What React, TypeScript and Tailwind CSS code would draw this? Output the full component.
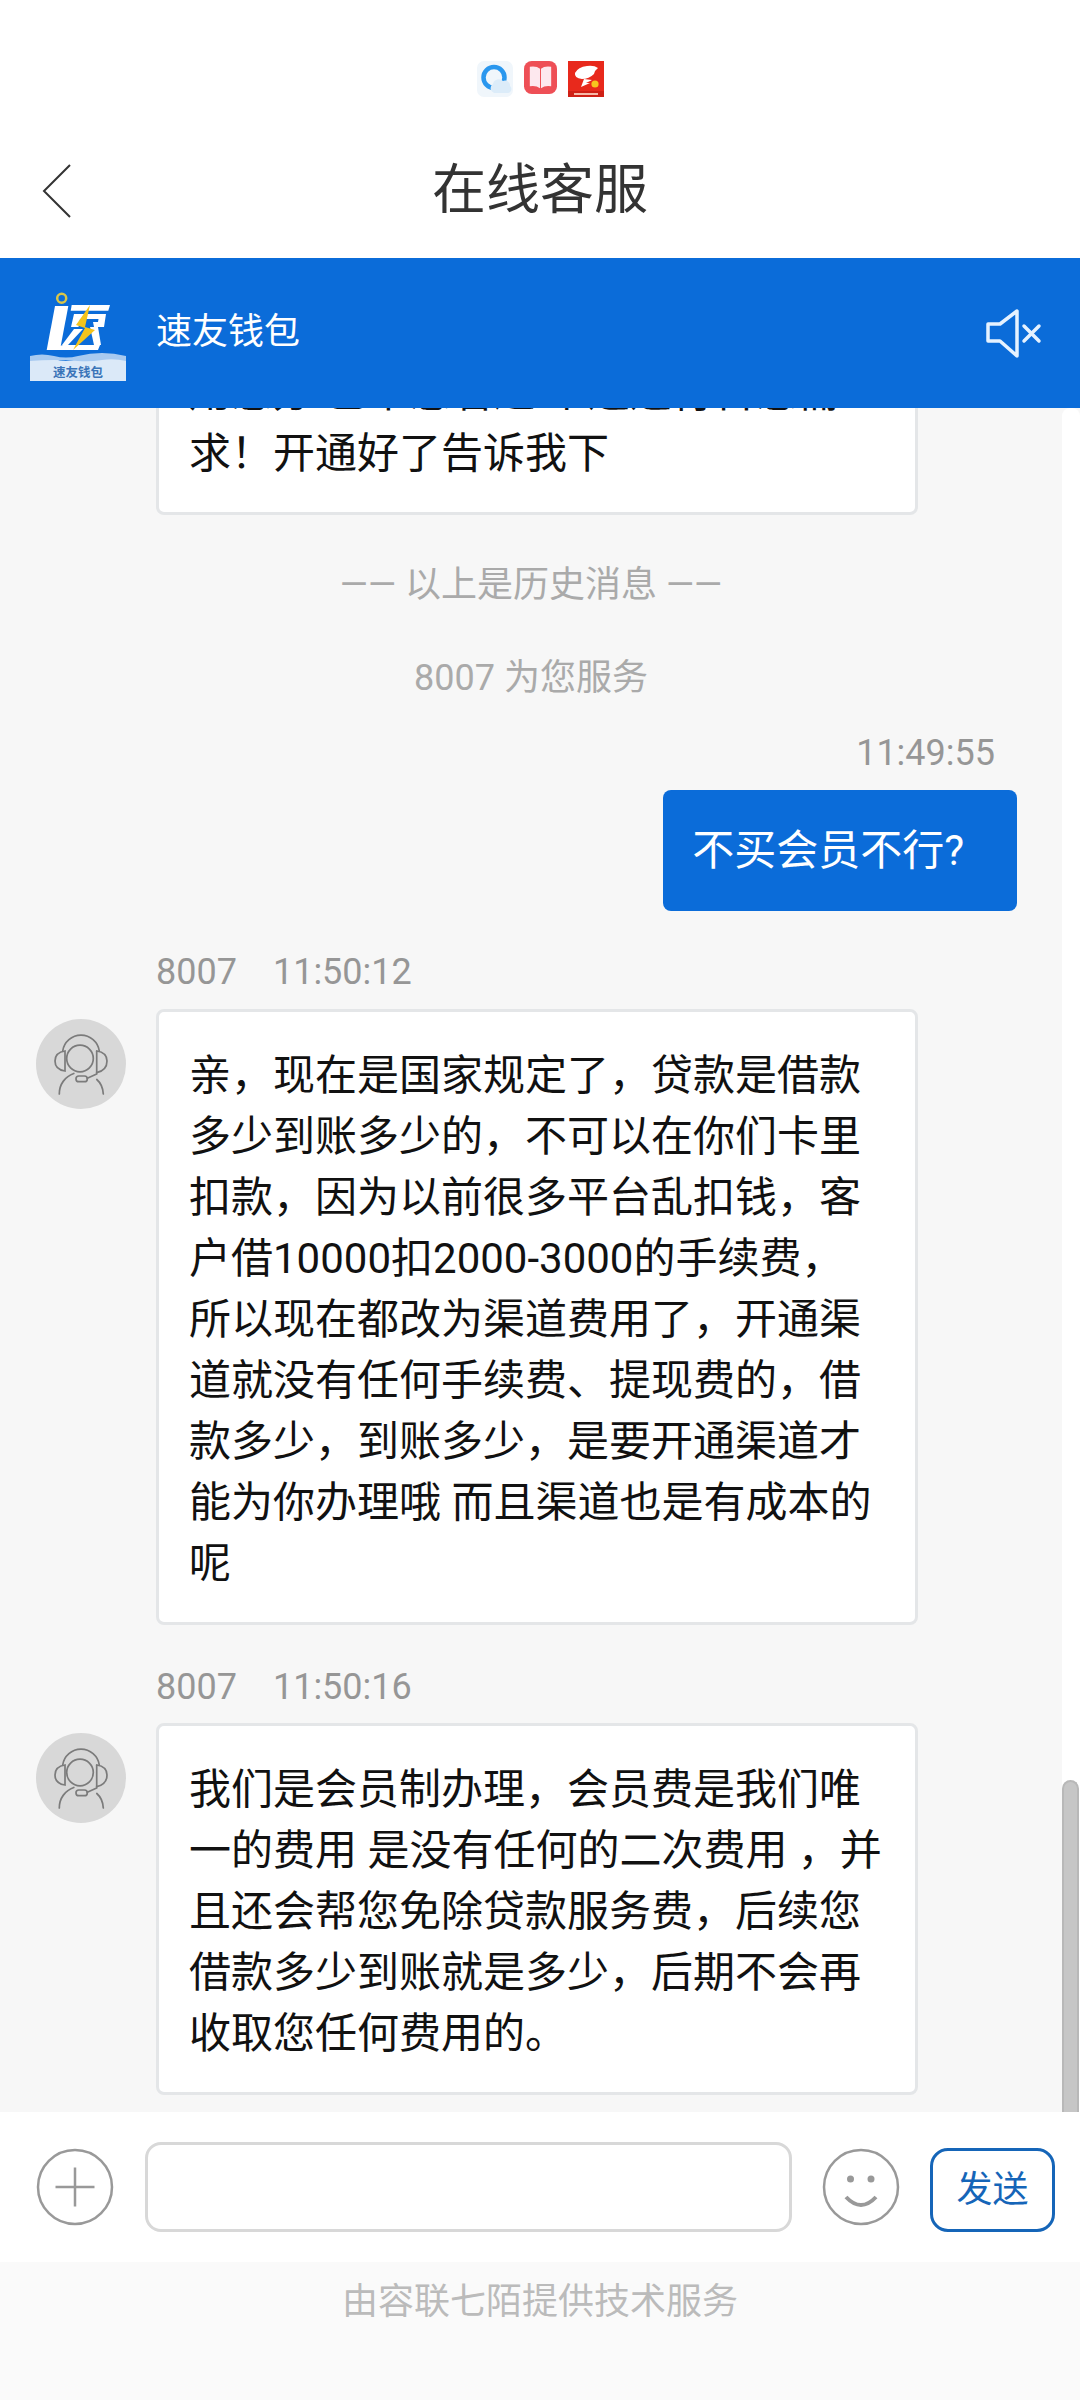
import React from 'react';

const font = { fontFamily: 'Roboto, "Noto Sans CJK SC", "Noto Sans", sans-serif' };

const MSG_RULES =
  '亲\uFF0C现在是国家规定了\uFF0C贷款是借款多少到账多少的\uFF0C不可以在你们卡里扣款\uFF0C因为以前很多平台乱扣钱\uFF0C客户借10000扣2000-3000的手续费\uFF0C所以现在都改为渠道费用了\uFF0C开通渠道就没有任何手续费、提现费的\uFF0C借款多少\uFF0C到账多少\uFF0C是要开通渠道才能为你办理哦 而且渠道也是有成本的呢';
const MSG_MEMBER =
  '我们是会员制办理\uFF0C会员费是我们唯一的费用 是没有任何的二次费用 \uFF0C并且还会帮您免除贷款服务费\uFF0C后续您借款多少到账就是多少\uFF0C后期不会再收取您任何费用的。';

const QQBrowserIcon = () => (
  <svg width="36" height="36" viewBox="0 0 36 36">
    <rect width="36" height="36" rx="7" fill="#f0f6fb" />
    <circle cx="17" cy="16.5" r="10.5" fill="none" stroke="#2a97ee" strokeWidth="4.5" />
    <path d="M17 32a5 5 0 0 1-1-9 6 6 0 0 1 10-3 5 5 0 0 1 7 5 4 4 0 0 1-2 7z" fill="#dcecf9" />
  </svg>
);

const BookIcon = () => (
  <svg width="33" height="33" viewBox="0 0 34 34">
    <rect width="34" height="34" rx="8" fill="#ee4f56" />
    <path d="M6 6q7-1 10.500 2v20q-4-3-10.500-2z" fill="#fde8ee" />
    <path d="M28 6q-7-1-10.500 2v20q4-3 10.500-2z" fill="#fde8ee" />
  </svg>
);

const FishIcon = () => (
  <svg width="36" height="36" viewBox="0 0 36 36">
    <rect width="36" height="36" fill="#e8291c" />
    <path d="M7 12q3-6 12-7 7-1 11 2-3 2-4 6-5 5-12 5-8-1-7-6z" fill="#fff" />
    <path d="M13 26l3-8 8 1-6 3 4 0z" fill="#fff" />
    <circle cx="27" cy="23" r="3.600" fill="#f7c51e" />
    <rect x="0" y="30" width="36" height="6" fill="#cf2015" />
    <rect x="6" y="32" width="24" height="2" fill="#f6b9a8" />
  </svg>
);

const LogoMark = () => (
  <svg width="96" height="92" viewBox="0 0 96 92" className="mt-[6px] shrink-0">
    <circle cx="31.700" cy="8.300" r="4.500" fill="none" stroke="#d8c64a" strokeWidth="2.500" />
    <path d="M25 16h13.300L30 60H16.700z" fill="#fff" />
    <path d="M41.700 15H80l-1.700 5.700H40.700z" fill="#fff" />
    <path d="M44 24h32l-2 13H64l-1-5h5l.5-3H50l-1.500 8H41z" fill="#fff" />
    <path d="M60 37h8l3 18h-7z" fill="#fff" />
    <path d="M44 39h9L38 55h-6z" fill="#fff" />
    <path d="M16.700 60H68l2-5H33z" fill="#fff" />
    <path d="M60 15L46 35l9 3-12 22 22-20-10-3z" fill="#f4c41c" />
    <path d="M0 70q12-5 24-1t24 0 24-3 24 3v22H0z" fill="#dbe9f8" />
    <path d="M0 66q12-3 24 0t24 0 24-3 24 3v5q-12-3-24-1t-24 1-24-1-24 1z" fill="#a8caf0" />
    <text x="48" y="86.500" fontSize="12.500" fontWeight="700" textAnchor="middle" fill="#3a74b8" style={font}>速友钱包</text>
  </svg>
);

const AgentAvatar = () => (
  <div className="w-[90px] h-[90px] rounded-full bg-[#d8d8d8] shrink-0">
    <svg width="90" height="90" viewBox="0 0 90 90" fill="none" stroke="#7b7b7b" strokeWidth="1.700" strokeLinecap="round">
      <circle cx="44" cy="39.500" r="13.300" />
      <path d="M26.700 32a18.500 18.500 0 0 1 36.600 0" />
      <path d="M29 32C22 33 19 37 19 42s3 9 10 10z" />
      <path d="M60.700 32c7 1 10.300 5 10.300 10s-3 10-10.300 11.700" />
      <path d="M60.700 32v23l-9.400 4.300" />
      <rect x="40" y="57" width="11.300" height="5.700" rx="2.800" />
      <path d="M23.300 75c0-10 6-17.500 14.500-20.500" />
      <path d="M67.300 75c-.3-6-2.500-11-6.500-14.500" />
    </svg>
  </div>
);

const Bubble = ({ text }: { text: React.ReactNode }) => (
  <div className="w-[762px] shrink-0 bg-white border-[3px] border-[#e4e6e8] rounded-[8px] px-[30px] pt-[33px] pb-[28px] text-[42px] leading-[61px] text-[#111]">
    {text}
  </div>
);

const AgentMessage = ({ time, text, gap }: { time: string; text: React.ReactNode; gap: string }) => (
  <div className={`flex flex-col ${gap}`}>
    <div className="pl-[156px] flex gap-[36px] text-[36px] leading-[50px] text-[#969696]">
      <span>8007</span>
      <span>{time}</span>
    </div>
    <div className="flex pl-[36px] gap-[30px] items-start">
      <div className="pt-[10px]"><AgentAvatar /></div>
      <Bubble text={text} />
    </div>
  </div>
);

export default function App() {
  return (
    <div className="w-[1080px] h-[2400px] flex flex-col bg-white overflow-hidden" style={font}>
      {/* App title */}
      <div className="h-[258px] shrink-0 bg-white flex flex-col">
        <div className="h-[120px] pt-[61px] flex justify-center items-start gap-[11px]">
          <QQBrowserIcon />
          <BookIcon />
          <FishIcon />
        </div>
        <div className="relative flex-1 flex items-center justify-center pt-[3px]">
          <svg className="absolute left-[41px] top-[43px]" width="31" height="56" viewBox="0 0 31 56" fill="none" stroke="#333" strokeWidth="2">
            <path d="M29 2L3 28l26 26" />
          </svg>
          <span className="text-[54px] leading-[70px] text-[#333]">在线客服</span>
        </div>
      </div>

      {/* Blue bar */}
      <div className="h-[150px] shrink-0 bg-[#0b6cd9] flex items-center pl-[30px] pr-[38px] relative z-10">
        <LogoMark />
        <span className="ml-[30px] pb-[3px] text-[36px] text-white">速友钱包</span>
        <svg className="ml-auto" width="56" height="49" viewBox="0 0 56 49" fill="none" stroke="#e6f2ff" strokeWidth="3.500" strokeLinejoin="round" strokeLinecap="round">
          <path d="M2 15h12L31 2v45L14 32H2z" />
          <path d="M38 17l15 15M53 17L38 32" />
        </svg>
      </div>

      {/* Messages */}
      <div className="flex-1 min-h-0 bg-[#f7f7f7] flex relative overflow-hidden">
        <div className="flex-1 flex flex-col justify-end overflow-hidden pb-[17px]">
          <div className="pl-[156px]">
            <Bubble text={<>用您办 已帮您看过 个通道符合您需<br />{'求\uFF01开通好了告诉我下'}</>} />
          </div>
          <div className="mt-[45px] text-center text-[36px] leading-[50px] text-[#aaa]">—— 以上是历史消息 ——</div>
          <div className="mt-[43px] text-center text-[36px] leading-[50px] text-[#aaa]">8007 为您服务</div>
          <div className="mt-[25px] pr-[67px] text-right text-[36px] leading-[50px] text-[#969696]">11:49:55</div>
          <div className="mt-[12px] flex justify-end pr-[45px]">
            <div className="bg-[#0b6cd9] rounded-[8px] pl-[29px] pr-[53px] py-[30px] text-[42px] leading-[61px] text-white">不买会员不行?</div>
          </div>
          <div className="mt-[36px] flex flex-col gap-[37px]">
            <AgentMessage gap="gap-[12px]" time="11:50:12" text={MSG_RULES} />
            <AgentMessage gap="gap-[11px]" time="11:50:16" text={MSG_MEMBER} />
          </div>
        </div>
        {/* Scrollbar */}
        <div className="w-[18px] shrink-0 bg-white rounded-t-[8px] flex flex-col justify-end">
          <div className="h-[332px] w-[17px] bg-[#c6c6c6] border-2 border-b-0 border-[#b8b8b8] rounded-t-[9px]" />
        </div>
      </div>

      {/* Input bar */}
      <div className="h-[150px] shrink-0 bg-white flex items-start pl-[36px] pt-[30px]">
        <svg width="78" height="78" viewBox="0 0 78 78" fill="none" stroke="#999" strokeWidth="2.500" className="shrink-0 mt-[6px]">
          <circle cx="39" cy="39" r="37" />
          <path d="M39 19.500v39M19.500 39h39" />
        </svg>
        <div className="ml-[31px] w-[647px] h-[90px] bg-white border-[3px] border-[#d8d8d8] rounded-[16px]" />
        <svg width="78" height="78" viewBox="0 0 78 78" fill="none" stroke="#999" strokeWidth="2.500" className="ml-[30px] mt-[6px] shrink-0">
          <circle cx="39" cy="39" r="37" />
          <circle cx="28.500" cy="31" r="3.500" fill="#999" stroke="none" />
          <circle cx="49" cy="31" r="3.500" fill="#999" stroke="none" />
          <path d="M24 49q15 16 30 0" strokeWidth="4" />
        </svg>
        <div className="ml-[30px] mt-[6px] w-[125px] h-[84px] border-[3px] border-[#1565b8] rounded-[18px] flex items-center justify-center text-[36px] text-[#1565b8]">发送</div>
      </div>

      {/* Footer */}
      <div className="h-[138px] shrink-0 bg-[#fafafa] pt-[15px] text-center text-[36px] leading-[50px] text-[#bbb]">由容联七陌提供技术服务</div>
    </div>
  );
}
